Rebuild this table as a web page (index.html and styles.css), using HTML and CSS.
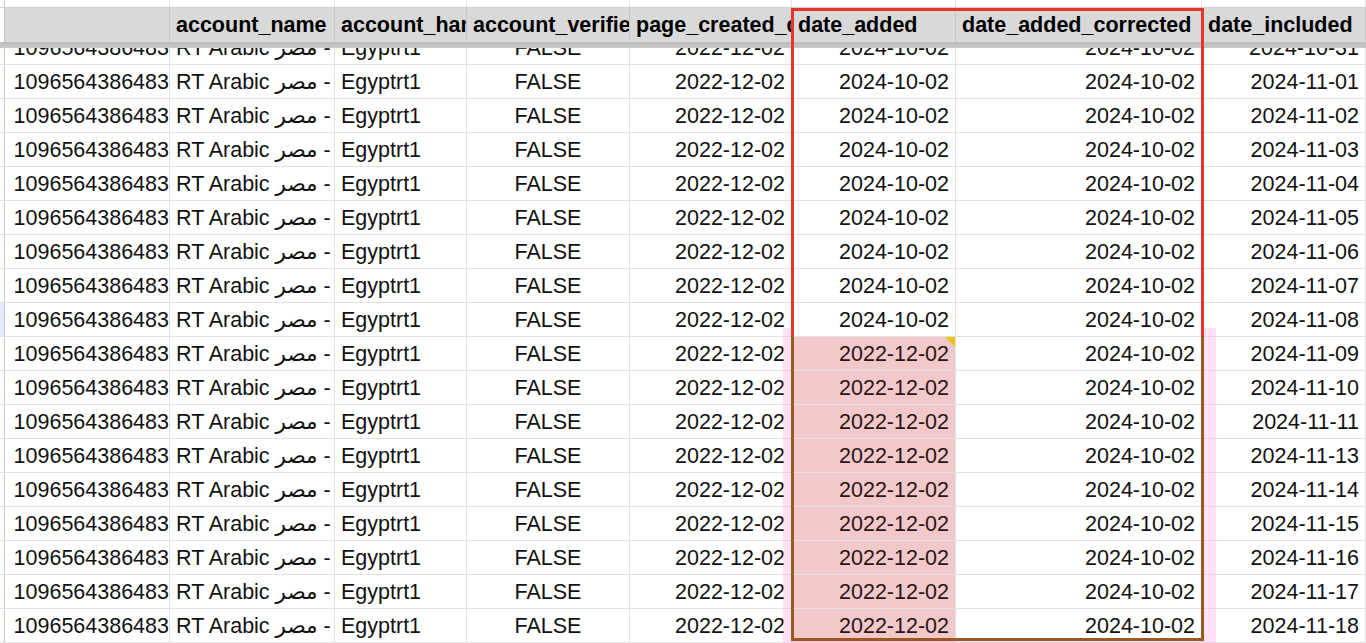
FILE: index.html
```html
<!DOCTYPE html>
<html>
<head>
<meta charset="utf-8">
<link rel="stylesheet" href="styles.css">
</head>
<body>
<div class="sheet">
  <div class="row top">
    <div class="c stub"></div><div class="c"></div><div class="c"></div><div class="c"></div><div class="c"></div><div class="c"></div><div class="c"></div><div class="c"></div><div class="c"></div>
  </div>
  <div class="row head">
    <div class="c stub"></div>
    <div class="c"></div>
    <div class="c">account_name</div>
    <div class="c">account_handle</div>
    <div class="c">account_verified</div>
    <div class="c">page_created_date</div>
    <div class="c">date_added</div>
    <div class="c">date_added_corrected</div>
    <div class="c">date_included</div>
  </div>
  <div class="freeze"></div>
  <div class="body">
    <div class="row first"><div class="c stub"></div><div class="c num">1096564386483</div><div class="c">RT Arabic <span dir="rtl">- مصر</span></div><div class="c">Egyptrt1</div><div class="c mid">FALSE</div><div class="c num">2022-12-02</div><div class="c num">2024-10-02</div><div class="c num">2024-10-02</div><div class="c num">2024-10-31</div></div>
    <div class="row"><div class="c stub"></div><div class="c num">1096564386483</div><div class="c">RT Arabic <span dir="rtl">- مصر</span></div><div class="c">Egyptrt1</div><div class="c mid">FALSE</div><div class="c num">2022-12-02</div><div class="c num">2024-10-02</div><div class="c num">2024-10-02</div><div class="c num">2024-11-01</div></div>
    <div class="row"><div class="c stub"></div><div class="c num">1096564386483</div><div class="c">RT Arabic <span dir="rtl">- مصر</span></div><div class="c">Egyptrt1</div><div class="c mid">FALSE</div><div class="c num">2022-12-02</div><div class="c num">2024-10-02</div><div class="c num">2024-10-02</div><div class="c num">2024-11-02</div></div>
    <div class="row"><div class="c stub"></div><div class="c num">1096564386483</div><div class="c">RT Arabic <span dir="rtl">- مصر</span></div><div class="c">Egyptrt1</div><div class="c mid">FALSE</div><div class="c num">2022-12-02</div><div class="c num">2024-10-02</div><div class="c num">2024-10-02</div><div class="c num">2024-11-03</div></div>
    <div class="row"><div class="c stub"></div><div class="c num">1096564386483</div><div class="c">RT Arabic <span dir="rtl">- مصر</span></div><div class="c">Egyptrt1</div><div class="c mid">FALSE</div><div class="c num">2022-12-02</div><div class="c num">2024-10-02</div><div class="c num">2024-10-02</div><div class="c num">2024-11-04</div></div>
    <div class="row"><div class="c stub"></div><div class="c num">1096564386483</div><div class="c">RT Arabic <span dir="rtl">- مصر</span></div><div class="c">Egyptrt1</div><div class="c mid">FALSE</div><div class="c num">2022-12-02</div><div class="c num">2024-10-02</div><div class="c num">2024-10-02</div><div class="c num">2024-11-05</div></div>
    <div class="row"><div class="c stub"></div><div class="c num">1096564386483</div><div class="c">RT Arabic <span dir="rtl">- مصر</span></div><div class="c">Egyptrt1</div><div class="c mid">FALSE</div><div class="c num">2022-12-02</div><div class="c num">2024-10-02</div><div class="c num">2024-10-02</div><div class="c num">2024-11-06</div></div>
    <div class="row"><div class="c stub"></div><div class="c num">1096564386483</div><div class="c">RT Arabic <span dir="rtl">- مصر</span></div><div class="c">Egyptrt1</div><div class="c mid">FALSE</div><div class="c num">2022-12-02</div><div class="c num">2024-10-02</div><div class="c num">2024-10-02</div><div class="c num">2024-11-07</div></div>
    <div class="row"><div class="c stub sel"></div><div class="c num">1096564386483</div><div class="c">RT Arabic <span dir="rtl">- مصر</span></div><div class="c">Egyptrt1</div><div class="c mid">FALSE</div><div class="c num">2022-12-02</div><div class="c num">2024-10-02</div><div class="c num">2024-10-02</div><div class="c num">2024-11-08</div></div>
    <div class="row"><div class="c stub"></div><div class="c num">1096564386483</div><div class="c">RT Arabic <span dir="rtl">- مصر</span></div><div class="c">Egyptrt1</div><div class="c mid">FALSE</div><div class="c num">2022-12-02</div><div class="c num bad note">2022-12-02</div><div class="c num">2024-10-02</div><div class="c num">2024-11-09</div></div>
    <div class="row"><div class="c stub"></div><div class="c num">1096564386483</div><div class="c">RT Arabic <span dir="rtl">- مصر</span></div><div class="c">Egyptrt1</div><div class="c mid">FALSE</div><div class="c num">2022-12-02</div><div class="c num bad">2022-12-02</div><div class="c num">2024-10-02</div><div class="c num">2024-11-10</div></div>
    <div class="row"><div class="c stub"></div><div class="c num">1096564386483</div><div class="c">RT Arabic <span dir="rtl">- مصر</span></div><div class="c">Egyptrt1</div><div class="c mid">FALSE</div><div class="c num">2022-12-02</div><div class="c num bad">2022-12-02</div><div class="c num">2024-10-02</div><div class="c num">2024-11-11</div></div>
    <div class="row"><div class="c stub"></div><div class="c num">1096564386483</div><div class="c">RT Arabic <span dir="rtl">- مصر</span></div><div class="c">Egyptrt1</div><div class="c mid">FALSE</div><div class="c num">2022-12-02</div><div class="c num bad">2022-12-02</div><div class="c num">2024-10-02</div><div class="c num">2024-11-13</div></div>
    <div class="row"><div class="c stub"></div><div class="c num">1096564386483</div><div class="c">RT Arabic <span dir="rtl">- مصر</span></div><div class="c">Egyptrt1</div><div class="c mid">FALSE</div><div class="c num">2022-12-02</div><div class="c num bad">2022-12-02</div><div class="c num">2024-10-02</div><div class="c num">2024-11-14</div></div>
    <div class="row"><div class="c stub"></div><div class="c num">1096564386483</div><div class="c">RT Arabic <span dir="rtl">- مصر</span></div><div class="c">Egyptrt1</div><div class="c mid">FALSE</div><div class="c num">2022-12-02</div><div class="c num bad">2022-12-02</div><div class="c num">2024-10-02</div><div class="c num">2024-11-15</div></div>
    <div class="row"><div class="c stub"></div><div class="c num">1096564386483</div><div class="c">RT Arabic <span dir="rtl">- مصر</span></div><div class="c">Egyptrt1</div><div class="c mid">FALSE</div><div class="c num">2022-12-02</div><div class="c num bad">2022-12-02</div><div class="c num">2024-10-02</div><div class="c num">2024-11-16</div></div>
    <div class="row"><div class="c stub"></div><div class="c num">1096564386483</div><div class="c">RT Arabic <span dir="rtl">- مصر</span></div><div class="c">Egyptrt1</div><div class="c mid">FALSE</div><div class="c num">2022-12-02</div><div class="c num bad">2022-12-02</div><div class="c num">2024-10-02</div><div class="c num">2024-11-17</div></div>
    <div class="row"><div class="c stub"></div><div class="c num">1096564386483</div><div class="c">RT Arabic <span dir="rtl">- مصر</span></div><div class="c">Egyptrt1</div><div class="c mid">FALSE</div><div class="c num">2022-12-02</div><div class="c num bad">2022-12-02</div><div class="c num">2024-10-02</div><div class="c num">2024-11-18</div></div>
  </div>
  <div class="mark mark-top"></div>
  <div class="mark mark-bottom"></div>
</div>
</body>
</html>
```

FILE: styles.css
```css
html, body {
  margin: 0;
  padding: 0;
  background: #fff;
}
.sheet {
  position: relative;
  width: 1366px;
  height: 643px;
  overflow: hidden;
  font-family: "Liberation Sans", "DejaVu Sans", Arial, sans-serif;
  font-size: 21.5px;
  color: #111;
}
.row {
  display: grid;
  grid-template-columns: 5px 165px 165px 132px 163px 162px 164px 246px 164px;
  height: 34px;
  border-bottom: 1px solid #e2e2e2;
  box-sizing: border-box;
}
.c {
  box-sizing: border-box;
  border-right: 1px solid #e2e2e2;
  padding: 0 6px;
  overflow: hidden;
  white-space: nowrap;
  line-height: 35px;
}
.stub {
  padding: 0;
  border-right: 1px solid #c8c8c8;
}
.stub.sel {
  background: #e3eafb;
}
.num {
  text-align: right;
  padding: 0 6px 0 2px;
}
.row .num:nth-child(2) {
  padding-right: 0;
}
.mid {
  text-align: center;
}
.top {
  height: 8px;
  border-bottom: 1px solid #d0d0d0;
}
.top .c {
  line-height: 8px;
}
.head {
  height: 34px;
  background: #d9d9d9;
  border-bottom: none;
  font-weight: bold;
  color: #000;
}
.head .c {
  border-right: 1px solid #c6c6c6;
  text-overflow: clip;
  line-height: 35px;
}
.head .stub {
  background: #fff;
}
.freeze {
  height: 6px;
  background: linear-gradient(#bcbcbc, #c9c9c9);
}
.body {
  height: 595px;
  overflow: hidden;
}
.row.first {
  margin-top: -17px;
}
.bad {
  background: #f2c9ca;
  color: #2a1414;
}
.note {
  position: relative;
}
.note::after {
  content: "";
  position: absolute;
  top: 0;
  right: 0;
  border-style: solid;
  border-width: 0 10px 10px 0;
  border-color: transparent #ecc21b transparent transparent;
}
.mark {
  position: absolute;
  left: 791px;
  width: 413px;
  box-sizing: border-box;
  pointer-events: none;
}
.mark-top {
  top: 8px;
  height: 328px;
  border: 3px solid #e8352c;
  border-bottom: none;
}
.mark-bottom {
  top: 336px;
  height: 305px;
  border: 3px solid #9b5820;
  border-top: none;
}
.mark-bottom::before {
  content: "";
  position: absolute;
  left: -11px;
  right: -15px;
  top: -8px;
  bottom: -8px;
  border: solid rgba(255, 170, 235, 0.35);
  border-width: 0 12px 5px 8px;
}
```
